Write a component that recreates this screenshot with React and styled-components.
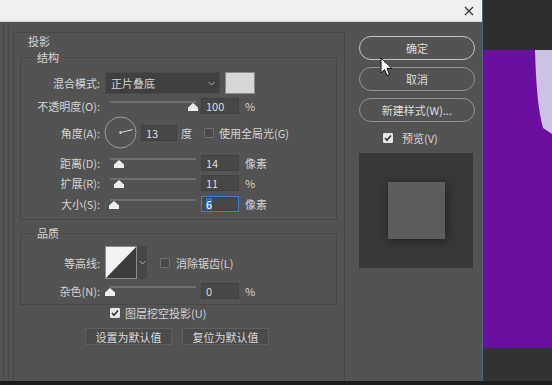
import styled, { createGlobalStyle } from 'styled-components';

const GlobalStyle = createGlobalStyle`
  body {
    margin: 0;
    background: #333;
    font-family: "Noto Sans CJK SC", "Noto Sans", sans-serif;
  }
`;

const Screen = styled.div`
  width: 552px;
  height: 385px;
  overflow: hidden;
  display: flex;
  flex-direction: column;
  position: relative;
`;

const Main = styled.div`
  display: flex;
  height: 381px;
`;

const BottomEdge = styled.div`
  height: 4px;
  background: #1c1c1c;
`;

const Dialog = styled.div`
  width: 483px;
  display: flex;
  flex-direction: column;
  border-right: 1px solid #4d6780;
  box-sizing: border-box;
`;

const TitleBar = styled.div`
  height: 22px;
  background: #efefef;
  display: flex;
  align-items: center;
  justify-content: flex-end;
  padding-right: 8px;
  border-bottom: 1px solid #d6d6d6;
  box-sizing: border-box;
`;

const Body = styled.div`
  flex: 1;
  background: #535353;
  display: flex;
  padding: 10px 0 0 3px;
  color: #d4d4d4;
  font-size: 11px;
`;

const StyleListEdge = styled.div`
  width: 4px;
  margin-top: -10px;
  border-left: 1px solid #474747;
  border-right: 1px solid #4a4a4a;
  margin-right: 4px;
`;

const StylePanel = styled.div`
  width: 332px;
  border: 1px solid #474747;
  border-bottom: none;
  display: flex;
  flex-direction: column;
  box-sizing: border-box;
`;

const PanelTitle = styled.div`
  padding: 1px 0 0 14px;
  line-height: 14px;
`;

const Group = styled.fieldset`
  margin: ${p => p.$top}px 7px 0 6px;
  padding: ${p => p.$pt}px 0 ${p => p.$pb}px 0;
  border: 1px solid #474747;
  min-width: 0;
`;

const Legend = styled.legend`
  margin-left: 14px;
  padding: 0 2px;
  line-height: 14px;
  font-size: 11px;
`;

const Row = styled.div`
  display: grid;
  grid-template-columns: 79px 1fr;
  column-gap: 5px;
  align-items: center;
  height: ${p => p.$h}px;
  margin-top: ${p => p.$mt || 0}px;
`;

const Label = styled.div`
  text-align: right;
  white-space: nowrap;
`;

const Controls = styled.div`
  display: flex;
  align-items: center;
  height: 100%;
`;

const Select = styled.div`
  width: 115px;
  height: 22px;
  background: #404040;
  border: 1px solid #4a4a4a;
  box-sizing: border-box;
  display: flex;
  align-items: center;
  justify-content: space-between;
  padding: 0 4px 0 5px;
`;

const Swatch = styled.div`
  width: 30px;
  height: 22px;
  margin-left: 5px;
  background: #d7d7d7;
  border: 1px solid #8a8a8a;
  box-sizing: border-box;
`;

const Slider = styled.div`
  position: relative;
  width: 86px;
  height: 16px;
  margin-left: 5px;
  align-self: flex-start;
  &::before {
    content: '';
    position: absolute;
    left: 0;
    right: 0;
    top: 3px;
    height: 2px;
    background: #6f6f6f;
  }
`;

const Thumb = styled.svg`
  position: absolute;
  top: 5px;
  width: 10px;
  height: 8px;
  margin-left: -5px;
`;

const Field = styled.div`
  width: ${p => p.$w || 38}px;
  height: 16px;
  margin-left: ${p => p.$ml || 6}px;
  background: #474747;
  border: 1px solid ${p => (p.$active ? '#3f7fcb' : '#404040')};
  box-sizing: border-box;
  display: flex;
  align-items: center;
  padding-left: 4px;
  color: #dcdcdc;
`;

const Selected = styled.span`
  background: #2f6fd0;
  color: #fff;
  line-height: 12px;
`;

const Unit = styled.span`
  margin-left: ${p => p.$ml || 6}px;
`;

const Dial = styled.svg`
  width: 33px;
  height: 33px;
  margin-left: -1px;
`;

const Check = styled.div`
  width: 10px;
  height: 10px;
  margin-left: ${p => p.$ml || 0}px;
  background: ${p => (p.$on ? '#e6e6e6' : '#4a4a4a')};
  border: 1px solid ${p => (p.$on ? '#e6e6e6' : '#707070')};
  border-radius: 1px;
  box-sizing: border-box;
  display: flex;
  align-items: center;
  justify-content: center;
  flex-shrink: 0;
`;

const CheckText = styled.span`
  margin-left: ${p => p.$ml || 5}px;
  white-space: nowrap;
`;

const Contour = styled.svg`
  width: 32px;
  height: 33px;
  display: block;
`;

const ContourArrow = styled.div`
  width: 10px;
  height: 33px;
  background: #474747;
  display: flex;
  align-items: center;
  justify-content: center;
`;

const Footer = styled.div`
  display: flex;
  flex-direction: column;
  align-items: flex-start;
`;

const CheckRow = styled.div`
  display: flex;
  align-items: center;
  height: 14px;
  margin: ${p => p.$mt}px 0 0 ${p => p.$ml}px;
`;

const ButtonRow = styled.div`
  display: flex;
  gap: 10px;
  margin: 8px 0 0 71px;
`;

const FlatButton = styled.div`
  width: 87px;
  height: 17px;
  background: #4b4b4b;
  border: 1px solid #5f5f5f;
  box-sizing: border-box;
  display: flex;
  align-items: center;
  justify-content: center;
  color: #dadada;
`;

const SideColumn = styled.div`
  display: flex;
  flex-direction: column;
  padding: 4px 0 0 14px;
`;

const PillButton = styled.div`
  width: 116px;
  height: 24px;
  margin-bottom: 7px;
  border: 1.5px solid ${p => (p.$primary ? '#c4c4c4' : '#939393')};
  border-radius: 12px;
  box-sizing: border-box;
  display: flex;
  align-items: center;
  justify-content: center;
  color: #dcdcdc;
`;

const PreviewToggle = styled.div`
  display: flex;
  align-items: center;
  height: 14px;
  margin: 2px 0 0 24px;
`;

const PreviewBox = styled.div`
  width: 114px;
  height: 115px;
  margin-top: 8px;
  background: #383838;
  display: flex;
  align-items: center;
  justify-content: center;
`;

const PreviewSquare = styled.div`
  width: 57px;
  height: 57px;
  background: #5c5c5c;
  box-shadow: 1px 2px 10px rgba(0, 0, 0, 0.45);
`;

const Canvas = styled.div`
  flex: 1;
  display: flex;
  flex-direction: column;
`;

const CanvasTop = styled.div`
  height: 50px;
  background: #2e2e2e;
`;

const CanvasArt = styled.div`
  flex: 1;
  background: #6a0fa2;
  overflow: hidden;
`;

const CanvasBottom = styled.div`
  height: 33px;
  background: #333;
`;

const Cursor = styled.svg`
  position: absolute;
  left: 380px;
  top: 57px;
  width: 14px;
  height: 20px;
`;

const Tick = () => (
  <svg width="8" height="8" viewBox="0 0 8 8">
    <polyline points="1,4 3,6.2 7,1.5" fill="none" stroke="#333" strokeWidth="1.6" />
  </svg>
);

const Chevron = () => (
  <svg width="7" height="5" viewBox="0 0 7 5">
    <polyline points="0.5,1 3.5,4 6.5,1" fill="none" stroke="#b0b0b0" strokeWidth="1" />
  </svg>
);

const SliderControl = ({ value }) => (
  <Slider>
    <Thumb viewBox="0 0 10 8" style={{ left: `${value}%` }}>
      <polygon points="0,8 0,4.5 5,0 10,4.5 10,8" fill="#eeeeee" />
    </Thumb>
  </Slider>
);

const ValueRow = ({ label, slider, value, unit, active, mt }) => (
  <Row $h={16} $mt={mt}>
    <Label>{label}</Label>
    <Controls>
      <SliderControl value={slider} />
      <Field $active={active} $ml={5}>{active ? <Selected>{value}</Selected> : value}</Field>
      <Unit>{unit}</Unit>
    </Controls>
  </Row>
);

export default function App() {
  return (
    <>
      <GlobalStyle />
      <Screen>
        <Main>
          <Dialog>
            <TitleBar>
              <svg width="10" height="10" viewBox="0 0 10 10">
                <path d="M1 1 L9 9 M9 1 L1 9" stroke="#333" strokeWidth="1.2" />
              </svg>
            </TitleBar>
            <Body>
              <StyleListEdge />
              <StylePanel>
                <PanelTitle>投影</PanelTitle>
                <Group $top={2} $pt={8} $pb={7}>
                  <Legend>结构</Legend>
                  <Row $h={22}>
                    <Label>混合模式:</Label>
                    <Controls>
                      <Select>
                        <span>正片叠底</span>
                        <Chevron />
                      </Select>
                      <Swatch />
                    </Controls>
                  </Row>
                  <ValueRow label="不透明度(O):" slider={97} value="100" unit="%" mt={4} />
                  <Row $h={33} $mt={2}>
                    <Label>角度(A):</Label>
                    <Controls>
                      <Dial viewBox="0 0 33 33">
                        <circle cx="16.5" cy="16.5" r="15.5" fill="none" stroke="#9c9c9c" strokeWidth="1" />
                        <line x1="16.5" y1="16.5" x2="28.5" y2="13.7" stroke="#d8d8d8" strokeWidth="1" />
                        <circle cx="16.5" cy="16.5" r="1.2" fill="#d8d8d8" />
                      </Dial>
                      <Field $w={36} $ml={4}>13</Field>
                      <Unit $ml={4}>度</Unit>
                      <Check $ml={12} />
                      <CheckText>使用全局光(G)</CheckText>
                    </Controls>
                  </Row>
                  <ValueRow label="距离(D):" slider={11} value="14" unit="像素" mt={6} />
                  <ValueRow label="扩展(R):" slider={10} value="11" unit="%" mt={4} />
                  <ValueRow label="大小(S):" slider={5} value="6" unit="像素" mt={5} active />
                </Group>
                <Group $top={6} $pt={6} $pb={5}>
                  <Legend>品质</Legend>
                  <Row $h={33}>
                    <Label>等高线:</Label>
                    <Controls>
                      <Contour viewBox="0 0 32 33">
                        <rect x="0.5" y="0.5" width="31" height="32" fill="#3c3c3c" stroke="#8c8c8c" />
                        <polygon points="1,1 31,1 1,32" fill="#f2f2f2" />
                      </Contour>
                      <ContourArrow>
                        <Chevron />
                      </ContourArrow>
                      <Check $ml={13} />
                      <CheckText $ml={6}>消除锯齿(L)</CheckText>
                    </Controls>
                  </Row>
                  <ValueRow label="杂色(N):" slider={0} value="0" unit="%" mt={4} />
                </Group>
                <Footer>
                  <CheckRow $mt={1} $ml={96}>
                    <Check $on>
                      <Tick />
                    </Check>
                    <CheckText>图层挖空投影(U)</CheckText>
                  </CheckRow>
                  <ButtonRow>
                    <FlatButton>设置为默认值</FlatButton>
                    <FlatButton>复位为默认值</FlatButton>
                  </ButtonRow>
                </Footer>
              </StylePanel>
              <SideColumn>
                <PillButton $primary>确定</PillButton>
                <PillButton>取消</PillButton>
                <PillButton>新建样式(W)...</PillButton>
                <PreviewToggle>
                  <Check $on>
                    <Tick />
                  </Check>
                  <CheckText $ml={9}>预览(V)</CheckText>
                </PreviewToggle>
                <PreviewBox>
                  <PreviewSquare />
                </PreviewBox>
              </SideColumn>
            </Body>
          </Dialog>
          <Canvas>
            <CanvasTop />
            <CanvasArt>
              <svg width="69" height="298" viewBox="0 0 69 298">
                <path d="M52 0 C53 35 55 60 60 78 L69 84 L69 0 Z" fill="#cbc2e4" />
              </svg>
            </CanvasArt>
            <CanvasBottom />
          </Canvas>
        </Main>
        <BottomEdge />
        <Cursor viewBox="0 0 14 20">
          <path d="M1 1 L1 16 L4.5 12.5 L7 18.5 L9.5 17.5 L7 11.5 L12 11.5 Z" fill="#fff" stroke="#111" strokeWidth="1" />
        </Cursor>
      </Screen>
    </>
  );
}
